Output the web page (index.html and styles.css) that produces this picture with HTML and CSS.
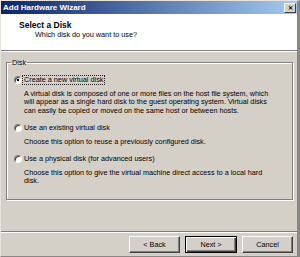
FILE: index.html
```html
<!DOCTYPE html>
<html lang="en">
<head>
  <meta charset="UTF-8">
  <title>Add Hardware Wizard</title>
  <link rel="stylesheet" href="styles.css">
</head>
<body>
  <div class="window">
    <div class="titlebar">
      <span class="title">Add Hardware Wizard</span>
      <span class="close">&#x2715;</span>
    </div>

    <div class="header">
      <div class="heading">Select a Disk</div>
      <div class="subheading">Which disk do you want to use?</div>
    </div>
    <div class="rule"></div>

    <div class="content">
      <fieldset class="group">
        <legend>Disk</legend>

        <div class="option">
          <label class="choice">
            <input type="radio" name="disk" checked>
            <span class="focus">Create a new virtual disk</span>
          </label>
          <p class="desc">
            A virtual disk is composed of one or more files on the host file system, which<br>
            will appear as a single hard disk to the guest operating system. Virtual disks<br>
            can easily be copied or moved on the same host or between hosts.
          </p>
        </div>

        <div class="option">
          <label class="choice">
            <input type="radio" name="disk">
            <span>Use an existing virtual disk</span>
          </label>
          <p class="desc">Choose this option to reuse a previously configured disk.</p>
        </div>

        <div class="option">
          <label class="choice">
            <input type="radio" name="disk">
            <span>Use a physical disk (for advanced users)</span>
          </label>
          <p class="desc">
            Choose this option to give the virtual machine direct access to a local hard<br>
            disk.
          </p>
        </div>
      </fieldset>
    </div>

    <div class="buttons">
      <button type="button" class="btn">&lt; Back</button>
      <button type="button" class="btn btn-default">Next &gt;</button>
      <button type="button" class="btn">Cancel</button>
    </div>
  </div>
</body>
</html>
```

FILE: styles.css
```css
body {
  margin: 0;
  font-family: "Liberation Sans", Arial, sans-serif;
  font-size: 7.25px;
  color: #000;
  background: #d4d0c8;
}
.window {
  width: 300px;
  height: 257px;
  box-sizing: border-box;
  border-style: solid;
  border-width: 1px 3px 1px 1px;
  border-color: #e6e3dc #8a8884 #8a8884 #e6e3dc;
  display: flex;
  flex-direction: column;
}
.titlebar {
  height: 13px;
  flex: none;
  background: linear-gradient(to right, #0a246a, #a6caf0);
  display: flex;
  align-items: center;
  justify-content: space-between;
  padding: 0 1px 0 2px;
}
.title {
  color: #fff;
  font-weight: bold;
  font-size: 8px;
}
.close {
  width: 12px;
  height: 10px;
  box-sizing: border-box;
  background: #d4d0c8;
  border: 1px solid;
  border-color: #fff #404040 #404040 #fff;
  font-size: 6px;
  font-weight: bold;
  line-height: 8px;
  text-align: center;
}
.header {
  height: 36px;
  flex: none;
  box-sizing: border-box;
  background: #fff;
  padding: 6px 0 0 18px;
}
.heading {
  font-weight: bold;
  font-size: 8.5px;
  line-height: 10px;
}
.subheading {
  line-height: 10px;
  margin-left: 16px;
}
.rule {
  flex: none;
  border-top: 1px solid #808080;
  border-bottom: 1px solid #fff;
}
.content {
  flex: 1;
  padding: 6px 4px 0 5px;
}
.group {
  margin: 0;
  padding: 8px 7px 13px 7px;
  border: 1px solid #808080;
  box-shadow: inset 1px 1px #fff, 1px 1px #fff;
}
.group legend {
  padding: 0 1px;
  margin-left: -3px;
  line-height: 9px;
}
.option {
  margin-bottom: 8px;
}
.option:last-child {
  margin-bottom: 0;
}
.choice {
  display: flex;
  align-items: center;
  height: 10px;
}
.choice input {
  appearance: none;
  margin: 0;
  width: 8px;
  height: 8px;
  border-radius: 50%;
  border: 1px solid;
  border-color: #808080 #fff #fff #808080;
  background: #fff;
  box-shadow: inset 1px 1px #404040;
  box-sizing: border-box;
}
.choice input:checked {
  background: radial-gradient(circle, #000 0 1.3px, #fff 1.6px);
}
.choice span {
  padding: 0 1px;
  border: 1px dotted transparent;
  line-height: 8px;
}
.choice .focus {
  border-color: #222;
}
.desc {
  margin: 5px 0 0 10px;
  line-height: 8.3px;
  white-space: nowrap;
}
.buttons {
  flex: none;
  display: flex;
  justify-content: flex-end;
  gap: 5px;
  padding: 4px 4px 3px;
  border-top: 1px solid #808080;
  box-shadow: inset 0 1px #fff;
}
.btn {
  width: 51px;
  height: 17px;
  padding: 0;
  font-family: inherit;
  font-size: 7.25px;
  color: #000;
  background: #d4d0c8;
  border: 1px solid;
  border-color: #fff #404040 #404040 #fff;
  box-shadow: inset -1px -1px #808080;
}
.btn-default {
  width: 52px;
  border-color: #000;
  box-shadow: inset 1px 1px #fff, inset -1px -1px #404040, inset -2px -2px #808080;
}
```
